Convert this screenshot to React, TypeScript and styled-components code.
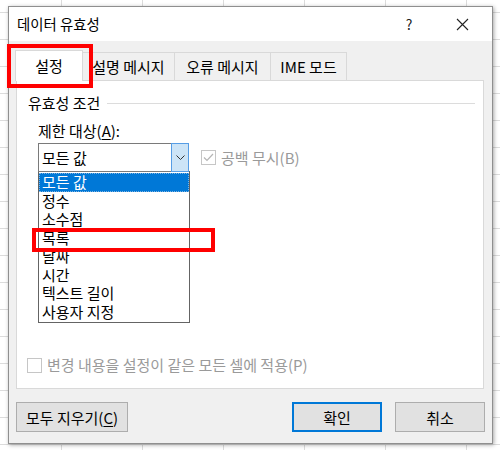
import React from "react";
import styled, { createGlobalStyle } from "styled-components";

const GlobalStyle = createGlobalStyle`
  body {
    margin: 0;
    font-family: "Noto Sans CJK KR", "Noto Sans", sans-serif;
    color: #000;
  }
  * { box-sizing: border-box; }
`;

const Desktop = styled.div`
  width: 500px;
  height: 450px;
  padding: 6px 7px 6px 8px;
  background-color: #fff;
  background-image: linear-gradient(to right, transparent 80px, #dcdcdc 80px),
    linear-gradient(to bottom, transparent 26px, #dcdcdc 26px);
  background-size: 81px 100%, 100% 27px;
  background-position: -19px 0, 0 -14px;
`;

const Dialog = styled.div`
  position: relative;
  width: 485px;
  height: 438px;
  display: flex;
  flex-direction: column;
  background: #f0f0f0;
  border: 1px solid #8f8f8f;
  box-shadow: 1px 1px 4px rgba(0, 0, 0, 0.35);
  font-size: 15px;
`;

const TitleBar = styled.div`
  height: 34px;
  display: flex;
  align-items: center;
  background: #fff;
  padding-left: 8px;
`;

const Title = styled.div`
  flex: 1;
  font-size: 14.4px;
  line-height: 20px;
`;

const TitleButton = styled.div<{ $w: number }>`
  width: ${(p) => p.$w}px;
  height: 34px;
  display: flex;
  align-items: center;
  justify-content: center;
  font-size: 14px;
  color: #222;
`;

const Body = styled.div`
  flex: 1;
  display: flex;
  flex-direction: column;
  padding: 11px 7px 0 7px;
`;

const TabStrip = styled.div`
  display: flex;
  align-items: flex-end;
  height: 28px;
  margin-left: -1px;
  position: relative;
  z-index: 1;
`;

const Tab = styled.div<{ $w: number; $active?: boolean }>`
  width: ${(p) => p.$w}px;
  height: ${(p) => (p.$active ? 31 : 28)}px;
  margin-bottom: ${(p) => (p.$active ? -1 : 0)}px;
  margin-left: -1px;
  display: flex;
  align-items: center;
  justify-content: center;
  padding-top: ${(p) => (p.$active ? 0 : 1)}px;
  line-height: 18px;
  background: ${(p) => (p.$active ? "#fff" : "#f0f0f0")};
  border: 1px solid #d9d9d9;
  border-bottom: none;
  &:first-child { margin-left: 0; }
`;

const Panel = styled.div`
  width: 468px;
  height: 309px;
  display: flex;
  flex-direction: column;
  background: #fff;
  border: 1px solid #d9d9d9;
  padding: 12px 8px 13px 11px;
`;

const GroupHeader = styled.div`
  display: flex;
  align-items: center;
  line-height: 20px;
  &::after {
    content: "";
    flex: 1;
    height: 1px;
    margin-left: 7px;
    background: #dcdcdc;
  }
`;

const Field = styled.div`
  margin-left: 10px;
  margin-top: 8px;
`;

const Label = styled.div`
  line-height: 20px;
  u { text-underline-offset: 2px; }
`;

const ComboRow = styled.div`
  display: flex;
  align-items: center;
  margin-top: 2px;
`;

const Combo = styled.div`
  width: 151px;
  height: 29px;
  display: flex;
  border: 1px solid #7a7a7a;
`;

const ComboValue = styled.div`
  flex: 1;
  padding-left: 3px;
  display: flex;
  align-items: center;
`;

const ComboButton = styled.div`
  width: 18px;
  margin: -1px -1px -1px 0;
  display: flex;
  align-items: center;
  justify-content: center;
  background: #cce4f7;
  border: 1px solid #569de5;
`;

const CheckRow = styled.div<{ $disabled?: boolean }>`
  display: flex;
  align-items: center;
  gap: 5px;
  line-height: 20px;
  color: ${(p) => (p.$disabled ? "#9a9a9a" : "#000")};
`;

const Box = styled.div`
  width: 15px;
  height: 15px;
  border: 1px solid #c6c6c6;
  background: #fff;
  display: flex;
  align-items: center;
  justify-content: center;
`;

const List = styled.div`
  width: 152px;
  margin-top: -1px;
  border: 1px solid #646464;
  background: #fff;
  padding: 1px 0;
`;

const ListItem = styled.div<{ $selected?: boolean }>`
  height: 18.5px;
  padding-left: 3px;
  line-height: 18.5px;
  white-space: nowrap;
  color: ${(p) => (p.$selected ? "#fff" : "#000")};
  background: ${(p) => (p.$selected ? "#0078d7" : "transparent")};
  outline: ${(p) => (p.$selected ? "1px dotted #7fb3e0" : "none")};
  outline-offset: -1px;
`;

const Footer = styled.div`
  margin-top: auto;
  margin-left: -1px;
`;

const ButtonRow = styled.div`
  display: flex;
  gap: 13px;
  padding: 13px 0 11px;
`;

const Button = styled.div<{ $w: number; $default?: boolean }>`
  width: ${(p) => p.$w}px;
  height: 30px;
  display: flex;
  align-items: center;
  justify-content: center;
  background: #e1e1e1;
  border: ${(p) => (p.$default ? "2px solid #0078d7" : "1px solid #adadad")};
  u { text-underline-offset: 2px; }
  &:first-child { margin-right: auto; }
`;

const Mark = styled.div<{ $l: number; $t: number; $w: number; $h: number }>`
  position: absolute;
  left: ${(p) => p.$l}px;
  top: ${(p) => p.$t}px;
  width: ${(p) => p.$w}px;
  height: ${(p) => p.$h}px;
  border: 4px solid #f00;
  z-index: 5;
`;

const items = ["모든 값", "정수", "소수점", "목록", "날짜", "시간", "텍스트 길이", "사용자 지정"];

export default function App() {
  return (
    <Desktop>
      <GlobalStyle />
      <Dialog>
        <TitleBar>
          <Title>데이터 유효성</Title>
          <TitleButton $w={46}>?</TitleButton>
          <TitleButton $w={60}>
            <svg width="13" height="13" viewBox="0 0 13 13">
              <path d="M1 1L12 12M12 1L1 12" stroke="#222" strokeWidth="1.1" fill="none" />
            </svg>
          </TitleButton>
        </TitleBar>
        <Body>
          <TabStrip>
            <Tab $w={68} $active>설정</Tab>
            <Tab $w={93}>설명 메시지</Tab>
            <Tab $w={97}>오류 메시지</Tab>
            <Tab $w={77}>IME 모드</Tab>
          </TabStrip>
          <Panel>
            <GroupHeader>유효성 조건</GroupHeader>
            <Field>
              <Label>
                제한 대상(<u>A</u>):
              </Label>
              <ComboRow>
                <Combo>
                  <ComboValue>모든 값</ComboValue>
                  <ComboButton>
                    <svg width="9" height="5" viewBox="0 0 9 5">
                      <path d="M0.5 0.5L4.5 4.5L8.5 0.5" stroke="#333" strokeWidth="1" fill="none" />
                    </svg>
                  </ComboButton>
                </Combo>
                <CheckRow $disabled style={{ marginLeft: 12 }}>
                  <Box>
                    <svg width="11" height="9" viewBox="0 0 11 9">
                      <path d="M1 4.5L4 7.5L10 1" stroke="#b5b5b5" strokeWidth="1.2" fill="none" />
                    </svg>
                  </Box>
                  공백 무시(B)
                </CheckRow>
              </ComboRow>
              <List>
                {items.map((it, i) => (
                  <ListItem key={it} $selected={i === 0}>
                    {it}
                  </ListItem>
                ))}
              </List>
            </Field>
            <Footer>
              <CheckRow $disabled>
                <Box />
                변경 내용을 설정이 같은 모든 셀에 적용(P)
              </CheckRow>
            </Footer>
          </Panel>
          <ButtonRow>
            <Button $w={112}>
              모두 지우기(<u>C</u>)
            </Button>
            <Button $w={90} $default>확인</Button>
            <Button $w={90}>취소</Button>
          </ButtonRow>
        </Body>
        <Mark $l={-2} $t={37} $w={86} $h={44} />
        <Mark $l={23} $t={221} $w={183} $h={24} />
      </Dialog>
    </Desktop>
  );
}
